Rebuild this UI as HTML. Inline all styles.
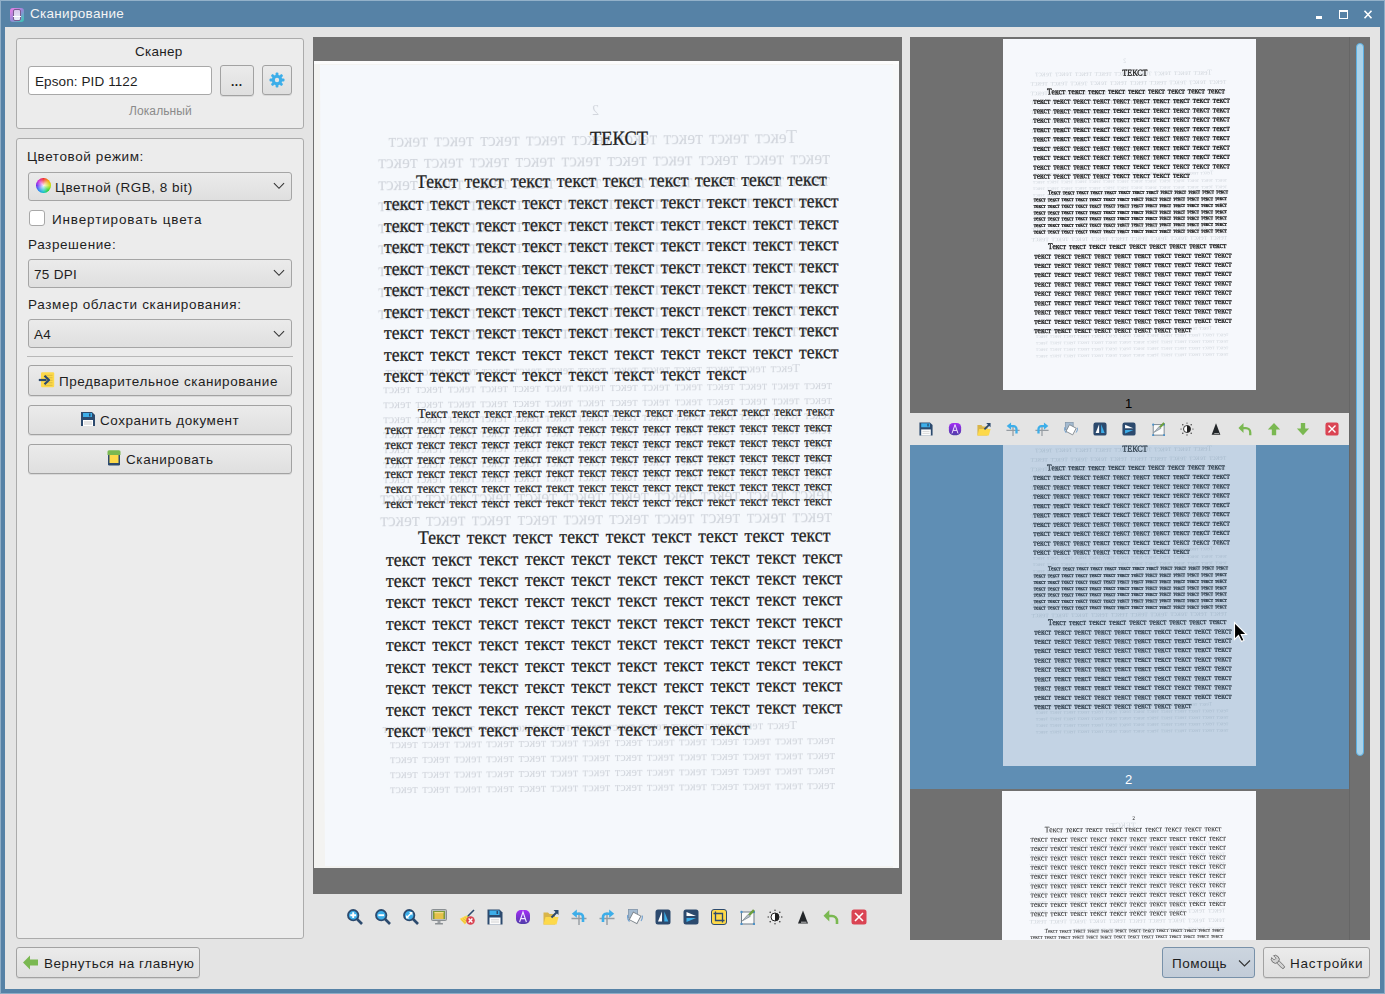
<!DOCTYPE html>
<html><head><meta charset="utf-8">
<style>
*{box-sizing:border-box;margin:0;padding:0}
html,body{width:1385px;height:994px;overflow:hidden;background:#5682a6;font-family:"Liberation Sans",sans-serif;font-size:13.5px;color:#1e1e1e}
.a{position:absolute}
#win{position:absolute;left:0;top:0;width:1385px;height:994px;background:#5682a6}
#content{position:absolute;left:5px;top:27px;width:1375px;height:962px;background:#e4e4e4}
.title{left:30px;top:6px;color:#f4f4f4;font-size:13.5px;letter-spacing:0.3px;white-space:nowrap}
.grp{position:absolute;background:#ececec;border:1px solid #ababab;border-radius:3px}
.txt{position:absolute;white-space:nowrap;line-height:16px}
.btn{position:absolute;border:1px solid #a2a2a2;border-radius:3px;background:linear-gradient(#ebebeb,#dfdfdf);box-shadow:0 1px 0 rgba(0,0,0,0.08)}
.combo{position:absolute;border:1px solid #a5a5a5;border-radius:3px;background:linear-gradient(#ebebeb,#dfdfdf)}
.chev{position:absolute;right:10px;top:9px;width:12px;height:8px}
.frame{position:absolute;background:#707070}
.sc{position:absolute;left:0;top:0;width:585px;height:807px;transform-origin:0 0}
#page .dk{color:#222;-webkit-text-stroke:0.25px #222}
.sc .dk{color:#1c1c1c;-webkit-text-stroke:0.7px #1c1c1c}
#page .fl{color:#d2d6dd;filter:blur(0.35px)}
.sc .fl{color:#d3d8de}
.sc3 .dk{color:#2a2a2a;-webkit-text-stroke:0.15px #2a2a2a}
.pl{position:absolute;white-space:nowrap;font-family:"Liberation Serif",serif;line-height:1em;transform-origin:0 0.8375em}
</style></head><body>
<div id="win">
  <div class="a" style="left:0;top:0;width:1385px;height:1px;background:#93b1c9"></div><div class="a" style="left:0;top:0;width:1px;height:994px;background:#8eadc6"></div><div class="a" style="left:1384px;top:0;width:1px;height:994px;background:#8eadc6"></div><div class="a" style="left:0;top:993px;width:1385px;height:1px;background:#8eadc6"></div>
  <!-- title icon -->
  <div class="a" style="left:10px;top:8px;width:14px;height:14px;border-radius:3px;background:linear-gradient(135deg,#f07ee8,#9a88d8 50%,#2fd0b0)">
    <div class="a" style="left:3px;top:1px;width:8px;height:12px;border:1px solid #7a5a90;border-radius:2px;background:linear-gradient(#d8c8ec,#e6eef6)"></div>
    <div class="a" style="left:3px;top:8px;width:8px;height:1px;background:#fff"></div>
  </div>
  <div class="a title">Сканирование</div>
  <!-- window buttons -->
  <div class="a" style="left:1316px;top:16px;width:6px;height:3px;background:#fff"></div>
  <div class="a" style="left:1339px;top:10px;width:9px;height:9px;border:1px solid #fff;border-top-width:2px"></div>
  <svg class="a" style="left:1363px;top:10px" width="10" height="9" viewBox="0 0 10 9"><path d="M1.5 0.8L8.5 8.2M8.5 0.8L1.5 8.2" stroke="#fff" stroke-width="1.6"/></svg>
</div>
<div id="content"></div>

<!-- PREVIEW -->

<div class="frame" style="left:313px;top:37px;width:589px;height:857px"></div>
<div id="page" class="a" style="left:314px;top:61px;width:585px;height:807px;background:#fcfcfc;overflow:hidden"><div class="a" style="left:0;top:3px;width:585px;height:804px;background:#f3f3f1"></div><div class="a" style="left:6px;top:4px;width:573px;height:801px;background:#f5f8fc;clip-path:polygon(0 0,100% 0,100% 100%,5px 100%)"></div><div class="a" style="left:579px;top:3px;width:6px;height:804px;background:#f7f8f9"></div><!--PAGE--><div class="pl fl" style="left:285.0px;top:43.1px;font-size:14px;word-spacing:0px;transform:rotate(-0.35deg) scaleX(-1);">2</div>
<div class="pl fl" style="left:483.0px;top:67.9px;font-size:17.8px;word-spacing:1.85px;transform:rotate(-0.55deg) scaleX(-1);">Текст текст текст текст текст текст текст текст текст</div>
<div class="pl fl" style="left:516.0px;top:89.4px;font-size:17.8px;word-spacing:1.85px;transform:rotate(-0.55deg) scaleX(-1);">текст текст текст текст текст текст текст текст текст текст</div>
<div class="pl fl" style="left:516.0px;top:110.8px;font-size:17.8px;word-spacing:1.85px;transform:rotate(-0.55deg) scaleX(-1);">текст текст текст текст текст текст текст текст текст текст</div>
<div class="pl fl" style="left:516.0px;top:132.3px;font-size:17.8px;word-spacing:1.85px;transform:rotate(-0.55deg) scaleX(-1);">текст текст текст текст текст текст текст текст текст текст</div>
<div class="pl fl" style="left:516.0px;top:153.7px;font-size:17.8px;word-spacing:1.85px;transform:rotate(-0.55deg) scaleX(-1);">текст текст текст текст текст текст текст текст текст текст</div>
<div class="pl fl" style="left:516.0px;top:175.2px;font-size:17.8px;word-spacing:1.85px;transform:rotate(-0.55deg) scaleX(-1);">текст текст текст текст текст текст текст текст текст текст</div>
<div class="pl fl" style="left:516.0px;top:196.6px;font-size:17.8px;word-spacing:1.85px;transform:rotate(-0.55deg) scaleX(-1);">текст текст текст текст текст текст текст текст текст текст</div>
<div class="pl fl" style="left:516.0px;top:218.1px;font-size:17.8px;word-spacing:1.85px;transform:rotate(-0.55deg) scaleX(-1);">текст текст текст текст текст текст текст текст текст текст</div>
<div class="pl fl" style="left:516.0px;top:239.5px;font-size:17.8px;word-spacing:1.85px;transform:rotate(-0.55deg) scaleX(-1);">текст текст текст текст текст текст текст текст текст текст</div>
<div class="pl fl" style="left:516.0px;top:261.0px;font-size:17.8px;word-spacing:1.85px;transform:rotate(-0.55deg) scaleX(-1);">текст текст текст текст текст текст текст текст</div>
<div class="pl fl" style="left:486.0px;top:300.9px;font-size:12.46px;word-spacing:1.3px;transform:rotate(-0.55deg) scaleX(-1);">Текст текст текст текст текст текст текст текст текст текст текст текст текст</div>
<div class="pl fl" style="left:518.0px;top:318.4px;font-size:12.46px;word-spacing:1.6px;transform:rotate(-0.55deg) scaleX(-1);">текст текст текст текст текст текст текст текст текст текст текст текст текст текст</div>
<div class="pl fl" style="left:518.0px;top:333.4px;font-size:12.46px;word-spacing:1.6px;transform:rotate(-0.55deg) scaleX(-1);">текст текст текст текст текст текст текст текст текст текст текст текст текст текст</div>
<div class="pl fl" style="left:518.0px;top:348.4px;font-size:12.46px;word-spacing:1.6px;transform:rotate(-0.55deg) scaleX(-1);">текст текст текст текст текст текст текст текст текст текст текст текст текст текст</div>
<div class="pl fl" style="left:518.0px;top:363.4px;font-size:12.46px;word-spacing:1.6px;transform:rotate(-0.55deg) scaleX(-1);">текст текст текст текст текст текст текст текст текст текст текст текст текст текст</div>
<div class="pl fl" style="left:518.0px;top:378.4px;font-size:12.46px;word-spacing:1.6px;transform:rotate(-0.55deg) scaleX(-1);">текст текст текст текст текст текст текст текст текст текст текст текст текст текст</div>
<div class="pl fl" style="left:518.0px;top:393.4px;font-size:12.46px;word-spacing:1.6px;transform:rotate(-0.55deg) scaleX(-1);">текст текст текст текст текст текст текст текст текст текст текст текст текст текст</div>
<div class="pl fl" style="left:518.0px;top:408.4px;font-size:12.46px;word-spacing:1.6px;transform:rotate(-0.55deg) scaleX(-1);">текст текст текст текст текст текст текст текст текст текст текст текст текст текст</div>
<div class="pl fl" style="left:518.0px;top:425.4px;font-size:17.8px;word-spacing:1.85px;transform:rotate(-0.55deg) scaleX(-1);">текст текст текст текст текст текст текст текст текст текст</div>
<div class="pl fl" style="left:518.0px;top:446.8px;font-size:17.8px;word-spacing:1.85px;transform:rotate(-0.55deg) scaleX(-1);">текст текст текст текст текст текст текст текст текст текст</div>
<div class="pl fl" style="left:483.0px;top:657.9px;font-size:12.46px;word-spacing:1.3px;transform:rotate(-0.55deg) scaleX(-1);">Текст текст текст текст текст текст текст текст текст текст текст текст текст</div>
<div class="pl fl" style="left:521.0px;top:673.1px;font-size:12.46px;word-spacing:1.3px;transform:rotate(-0.55deg) scaleX(-1);">текст текст текст текст текст текст текст текст текст текст текст текст текст текст</div>
<div class="pl fl" style="left:521.0px;top:687.9px;font-size:12.46px;word-spacing:1.3px;transform:rotate(-0.55deg) scaleX(-1);">текст текст текст текст текст текст текст текст текст текст текст текст текст текст</div>
<div class="pl fl" style="left:521.0px;top:702.7px;font-size:12.46px;word-spacing:1.3px;transform:rotate(-0.55deg) scaleX(-1);">текст текст текст текст текст текст текст текст текст текст текст текст текст текст</div>
<div class="pl fl" style="left:521.0px;top:717.5px;font-size:12.46px;word-spacing:1.3px;transform:rotate(-0.55deg) scaleX(-1);">текст текст текст текст текст текст текст текст текст текст текст текст текст текст</div><div class="pl dk" style="left:276.0px;top:68.5px;font-size:18.5px;word-spacing:0px;transform:rotate(-0.35deg) scaleY(1.08);">ТЕКСТ</div>
<div class="pl dk" style="left:101.5px;top:113.2px;font-size:17.8px;word-spacing:2.15px;transform:rotate(-0.35deg) scaleY(1.08);">Текст текст текст текст текст текст текст текст текст</div>
<div class="pl dk" style="left:69.5px;top:135.4px;font-size:17.8px;word-spacing:2.15px;transform:rotate(-0.35deg) scaleY(1.08);">текст текст текст текст текст текст текст текст текст текст</div>
<div class="pl dk" style="left:69.5px;top:156.8px;font-size:17.8px;word-spacing:2.15px;transform:rotate(-0.35deg) scaleY(1.08);">текст текст текст текст текст текст текст текст текст текст</div>
<div class="pl dk" style="left:69.5px;top:178.3px;font-size:17.8px;word-spacing:2.15px;transform:rotate(-0.35deg) scaleY(1.08);">текст текст текст текст текст текст текст текст текст текст</div>
<div class="pl dk" style="left:69.5px;top:199.7px;font-size:17.8px;word-spacing:2.15px;transform:rotate(-0.35deg) scaleY(1.08);">текст текст текст текст текст текст текст текст текст текст</div>
<div class="pl dk" style="left:69.5px;top:221.2px;font-size:17.8px;word-spacing:2.15px;transform:rotate(-0.35deg) scaleY(1.08);">текст текст текст текст текст текст текст текст текст текст</div>
<div class="pl dk" style="left:69.5px;top:242.6px;font-size:17.8px;word-spacing:2.15px;transform:rotate(-0.35deg) scaleY(1.08);">текст текст текст текст текст текст текст текст текст текст</div>
<div class="pl dk" style="left:69.5px;top:264.1px;font-size:17.8px;word-spacing:2.15px;transform:rotate(-0.35deg) scaleY(1.08);">текст текст текст текст текст текст текст текст текст текст</div>
<div class="pl dk" style="left:69.5px;top:285.5px;font-size:17.8px;word-spacing:2.15px;transform:rotate(-0.35deg) scaleY(1.08);">текст текст текст текст текст текст текст текст текст текст</div>
<div class="pl dk" style="left:69.7px;top:307.0px;font-size:17.8px;word-spacing:2.15px;transform:rotate(-0.35deg) scaleY(1.08);">текст текст текст текст текст текст текст текст</div>
<div class="pl dk" style="left:103.8px;top:347.2px;font-size:12.46px;word-spacing:1.45px;transform:rotate(-0.35deg) scaleY(1.08);">Текст текст текст текст текст текст текст текст текст текст текст текст текст</div>
<div class="pl dk" style="left:70.6px;top:362.6px;font-size:12.46px;word-spacing:1.45px;transform:rotate(-0.35deg) scaleY(1.08);">текст текст текст текст текст текст текст текст текст текст текст текст текст текст</div>
<div class="pl dk" style="left:70.6px;top:377.5px;font-size:12.46px;word-spacing:1.45px;transform:rotate(-0.35deg) scaleY(1.08);">текст текст текст текст текст текст текст текст текст текст текст текст текст текст</div>
<div class="pl dk" style="left:70.6px;top:392.5px;font-size:12.46px;word-spacing:1.45px;transform:rotate(-0.35deg) scaleY(1.08);">текст текст текст текст текст текст текст текст текст текст текст текст текст текст</div>
<div class="pl dk" style="left:70.6px;top:407.4px;font-size:12.46px;word-spacing:1.45px;transform:rotate(-0.35deg) scaleY(1.08);">текст текст текст текст текст текст текст текст текст текст текст текст текст текст</div>
<div class="pl dk" style="left:70.6px;top:422.4px;font-size:12.46px;word-spacing:1.45px;transform:rotate(-0.35deg) scaleY(1.08);">текст текст текст текст текст текст текст текст текст текст текст текст текст текст</div>
<div class="pl dk" style="left:70.6px;top:437.3px;font-size:12.46px;word-spacing:1.45px;transform:rotate(-0.35deg) scaleY(1.08);">текст текст текст текст текст текст текст текст текст текст текст текст текст текст</div>
<div class="pl dk" style="left:104.2px;top:468.9px;font-size:17.8px;word-spacing:2.35px;transform:rotate(-0.35deg) scaleY(1.08);">Текст текст текст текст текст текст текст текст текст</div>
<div class="pl dk" style="left:71.7px;top:490.6px;font-size:17.8px;word-spacing:2.35px;transform:rotate(-0.35deg) scaleY(1.08);">текст текст текст текст текст текст текст текст текст текст</div>
<div class="pl dk" style="left:71.7px;top:512.0px;font-size:17.8px;word-spacing:2.35px;transform:rotate(-0.35deg) scaleY(1.08);">текст текст текст текст текст текст текст текст текст текст</div>
<div class="pl dk" style="left:71.7px;top:533.4px;font-size:17.8px;word-spacing:2.35px;transform:rotate(-0.35deg) scaleY(1.08);">текст текст текст текст текст текст текст текст текст текст</div>
<div class="pl dk" style="left:71.7px;top:554.9px;font-size:17.8px;word-spacing:2.35px;transform:rotate(-0.35deg) scaleY(1.08);">текст текст текст текст текст текст текст текст текст текст</div>
<div class="pl dk" style="left:71.7px;top:576.3px;font-size:17.8px;word-spacing:2.35px;transform:rotate(-0.35deg) scaleY(1.08);">текст текст текст текст текст текст текст текст текст текст</div>
<div class="pl dk" style="left:71.7px;top:597.7px;font-size:17.8px;word-spacing:2.35px;transform:rotate(-0.35deg) scaleY(1.08);">текст текст текст текст текст текст текст текст текст текст</div>
<div class="pl dk" style="left:71.7px;top:619.1px;font-size:17.8px;word-spacing:2.35px;transform:rotate(-0.35deg) scaleY(1.08);">текст текст текст текст текст текст текст текст текст текст</div>
<div class="pl dk" style="left:71.7px;top:640.5px;font-size:17.8px;word-spacing:2.35px;transform:rotate(-0.35deg) scaleY(1.08);">текст текст текст текст текст текст текст текст текст текст</div>
<div class="pl dk" style="left:71.7px;top:661.9px;font-size:17.8px;word-spacing:2.35px;transform:rotate(-0.35deg) scaleY(1.08);">текст текст текст текст текст текст текст текст</div><!--/PAGE--></div>

<!-- RIGHT LIST -->

<div class="frame" style="left:910px;top:37px;width:460px;height:903px;overflow:hidden">
  <div class="a" style="left:439px;top:0;width:1px;height:903px;background:#666"></div>
  <div class="a" style="left:446px;top:6px;width:8px;height:713px;border-radius:4px;background:#abd3ea;border:1px solid #5cb0e2"></div>
  <div id="t1" class="a" style="left:93px;top:2px;width:253px;height:351px;background:#f6f8fc;overflow:hidden"><div class="sc" style="transform:scale(0.4325,0.435)"><!--T1--><div class="pl fl" style="left:285.0px;top:43.1px;font-size:14px;word-spacing:0px;transform:rotate(-0.35deg) scaleX(-1);">2</div>
<div class="pl fl" style="left:483.0px;top:67.9px;font-size:17.8px;word-spacing:1.85px;transform:rotate(-0.55deg) scaleX(-1);">Текст текст текст текст текст текст текст текст текст</div>
<div class="pl fl" style="left:516.0px;top:89.4px;font-size:17.8px;word-spacing:1.85px;transform:rotate(-0.55deg) scaleX(-1);">текст текст текст текст текст текст текст текст текст текст</div>
<div class="pl fl" style="left:516.0px;top:110.8px;font-size:17.8px;word-spacing:1.85px;transform:rotate(-0.55deg) scaleX(-1);">текст текст текст текст текст текст текст текст текст текст</div>
<div class="pl fl" style="left:516.0px;top:132.3px;font-size:17.8px;word-spacing:1.85px;transform:rotate(-0.55deg) scaleX(-1);">текст текст текст текст текст текст текст текст текст текст</div>
<div class="pl fl" style="left:516.0px;top:153.7px;font-size:17.8px;word-spacing:1.85px;transform:rotate(-0.55deg) scaleX(-1);">текст текст текст текст текст текст текст текст текст текст</div>
<div class="pl fl" style="left:516.0px;top:175.2px;font-size:17.8px;word-spacing:1.85px;transform:rotate(-0.55deg) scaleX(-1);">текст текст текст текст текст текст текст текст текст текст</div>
<div class="pl fl" style="left:516.0px;top:196.6px;font-size:17.8px;word-spacing:1.85px;transform:rotate(-0.55deg) scaleX(-1);">текст текст текст текст текст текст текст текст текст текст</div>
<div class="pl fl" style="left:516.0px;top:218.1px;font-size:17.8px;word-spacing:1.85px;transform:rotate(-0.55deg) scaleX(-1);">текст текст текст текст текст текст текст текст текст текст</div>
<div class="pl fl" style="left:516.0px;top:239.5px;font-size:17.8px;word-spacing:1.85px;transform:rotate(-0.55deg) scaleX(-1);">текст текст текст текст текст текст текст текст текст текст</div>
<div class="pl fl" style="left:516.0px;top:261.0px;font-size:17.8px;word-spacing:1.85px;transform:rotate(-0.55deg) scaleX(-1);">текст текст текст текст текст текст текст текст</div>
<div class="pl fl" style="left:486.0px;top:300.9px;font-size:12.46px;word-spacing:1.3px;transform:rotate(-0.55deg) scaleX(-1);">Текст текст текст текст текст текст текст текст текст текст текст текст текст</div>
<div class="pl fl" style="left:518.0px;top:318.4px;font-size:12.46px;word-spacing:1.6px;transform:rotate(-0.55deg) scaleX(-1);">текст текст текст текст текст текст текст текст текст текст текст текст текст текст</div>
<div class="pl fl" style="left:518.0px;top:333.4px;font-size:12.46px;word-spacing:1.6px;transform:rotate(-0.55deg) scaleX(-1);">текст текст текст текст текст текст текст текст текст текст текст текст текст текст</div>
<div class="pl fl" style="left:518.0px;top:348.4px;font-size:12.46px;word-spacing:1.6px;transform:rotate(-0.55deg) scaleX(-1);">текст текст текст текст текст текст текст текст текст текст текст текст текст текст</div>
<div class="pl fl" style="left:518.0px;top:363.4px;font-size:12.46px;word-spacing:1.6px;transform:rotate(-0.55deg) scaleX(-1);">текст текст текст текст текст текст текст текст текст текст текст текст текст текст</div>
<div class="pl fl" style="left:518.0px;top:378.4px;font-size:12.46px;word-spacing:1.6px;transform:rotate(-0.55deg) scaleX(-1);">текст текст текст текст текст текст текст текст текст текст текст текст текст текст</div>
<div class="pl fl" style="left:518.0px;top:393.4px;font-size:12.46px;word-spacing:1.6px;transform:rotate(-0.55deg) scaleX(-1);">текст текст текст текст текст текст текст текст текст текст текст текст текст текст</div>
<div class="pl fl" style="left:518.0px;top:408.4px;font-size:12.46px;word-spacing:1.6px;transform:rotate(-0.55deg) scaleX(-1);">текст текст текст текст текст текст текст текст текст текст текст текст текст текст</div>
<div class="pl fl" style="left:518.0px;top:425.4px;font-size:17.8px;word-spacing:1.85px;transform:rotate(-0.55deg) scaleX(-1);">текст текст текст текст текст текст текст текст текст текст</div>
<div class="pl fl" style="left:518.0px;top:446.8px;font-size:17.8px;word-spacing:1.85px;transform:rotate(-0.55deg) scaleX(-1);">текст текст текст текст текст текст текст текст текст текст</div>
<div class="pl fl" style="left:483.0px;top:657.9px;font-size:12.46px;word-spacing:1.3px;transform:rotate(-0.55deg) scaleX(-1);">Текст текст текст текст текст текст текст текст текст текст текст текст текст</div>
<div class="pl fl" style="left:521.0px;top:673.1px;font-size:12.46px;word-spacing:1.3px;transform:rotate(-0.55deg) scaleX(-1);">текст текст текст текст текст текст текст текст текст текст текст текст текст текст</div>
<div class="pl fl" style="left:521.0px;top:687.9px;font-size:12.46px;word-spacing:1.3px;transform:rotate(-0.55deg) scaleX(-1);">текст текст текст текст текст текст текст текст текст текст текст текст текст текст</div>
<div class="pl fl" style="left:521.0px;top:702.7px;font-size:12.46px;word-spacing:1.3px;transform:rotate(-0.55deg) scaleX(-1);">текст текст текст текст текст текст текст текст текст текст текст текст текст текст</div>
<div class="pl fl" style="left:521.0px;top:717.5px;font-size:12.46px;word-spacing:1.3px;transform:rotate(-0.55deg) scaleX(-1);">текст текст текст текст текст текст текст текст текст текст текст текст текст текст</div><div class="pl dk" style="left:276.0px;top:68.5px;font-size:18.5px;word-spacing:0px;transform:rotate(-0.35deg) scaleY(1.08);">ТЕКСТ</div>
<div class="pl dk" style="left:101.5px;top:113.2px;font-size:17.8px;word-spacing:2.15px;transform:rotate(-0.35deg) scaleY(1.08);">Текст текст текст текст текст текст текст текст текст</div>
<div class="pl dk" style="left:69.5px;top:135.4px;font-size:17.8px;word-spacing:2.15px;transform:rotate(-0.35deg) scaleY(1.08);">текст текст текст текст текст текст текст текст текст текст</div>
<div class="pl dk" style="left:69.5px;top:156.8px;font-size:17.8px;word-spacing:2.15px;transform:rotate(-0.35deg) scaleY(1.08);">текст текст текст текст текст текст текст текст текст текст</div>
<div class="pl dk" style="left:69.5px;top:178.3px;font-size:17.8px;word-spacing:2.15px;transform:rotate(-0.35deg) scaleY(1.08);">текст текст текст текст текст текст текст текст текст текст</div>
<div class="pl dk" style="left:69.5px;top:199.7px;font-size:17.8px;word-spacing:2.15px;transform:rotate(-0.35deg) scaleY(1.08);">текст текст текст текст текст текст текст текст текст текст</div>
<div class="pl dk" style="left:69.5px;top:221.2px;font-size:17.8px;word-spacing:2.15px;transform:rotate(-0.35deg) scaleY(1.08);">текст текст текст текст текст текст текст текст текст текст</div>
<div class="pl dk" style="left:69.5px;top:242.6px;font-size:17.8px;word-spacing:2.15px;transform:rotate(-0.35deg) scaleY(1.08);">текст текст текст текст текст текст текст текст текст текст</div>
<div class="pl dk" style="left:69.5px;top:264.1px;font-size:17.8px;word-spacing:2.15px;transform:rotate(-0.35deg) scaleY(1.08);">текст текст текст текст текст текст текст текст текст текст</div>
<div class="pl dk" style="left:69.5px;top:285.5px;font-size:17.8px;word-spacing:2.15px;transform:rotate(-0.35deg) scaleY(1.08);">текст текст текст текст текст текст текст текст текст текст</div>
<div class="pl dk" style="left:69.7px;top:307.0px;font-size:17.8px;word-spacing:2.15px;transform:rotate(-0.35deg) scaleY(1.08);">текст текст текст текст текст текст текст текст</div>
<div class="pl dk" style="left:103.8px;top:347.2px;font-size:12.46px;word-spacing:1.45px;transform:rotate(-0.35deg) scaleY(1.08);">Текст текст текст текст текст текст текст текст текст текст текст текст текст</div>
<div class="pl dk" style="left:70.6px;top:362.6px;font-size:12.46px;word-spacing:1.45px;transform:rotate(-0.35deg) scaleY(1.08);">текст текст текст текст текст текст текст текст текст текст текст текст текст текст</div>
<div class="pl dk" style="left:70.6px;top:377.5px;font-size:12.46px;word-spacing:1.45px;transform:rotate(-0.35deg) scaleY(1.08);">текст текст текст текст текст текст текст текст текст текст текст текст текст текст</div>
<div class="pl dk" style="left:70.6px;top:392.5px;font-size:12.46px;word-spacing:1.45px;transform:rotate(-0.35deg) scaleY(1.08);">текст текст текст текст текст текст текст текст текст текст текст текст текст текст</div>
<div class="pl dk" style="left:70.6px;top:407.4px;font-size:12.46px;word-spacing:1.45px;transform:rotate(-0.35deg) scaleY(1.08);">текст текст текст текст текст текст текст текст текст текст текст текст текст текст</div>
<div class="pl dk" style="left:70.6px;top:422.4px;font-size:12.46px;word-spacing:1.45px;transform:rotate(-0.35deg) scaleY(1.08);">текст текст текст текст текст текст текст текст текст текст текст текст текст текст</div>
<div class="pl dk" style="left:70.6px;top:437.3px;font-size:12.46px;word-spacing:1.45px;transform:rotate(-0.35deg) scaleY(1.08);">текст текст текст текст текст текст текст текст текст текст текст текст текст текст</div>
<div class="pl dk" style="left:104.2px;top:468.9px;font-size:17.8px;word-spacing:2.35px;transform:rotate(-0.35deg) scaleY(1.08);">Текст текст текст текст текст текст текст текст текст</div>
<div class="pl dk" style="left:71.7px;top:490.6px;font-size:17.8px;word-spacing:2.35px;transform:rotate(-0.35deg) scaleY(1.08);">текст текст текст текст текст текст текст текст текст текст</div>
<div class="pl dk" style="left:71.7px;top:512.0px;font-size:17.8px;word-spacing:2.35px;transform:rotate(-0.35deg) scaleY(1.08);">текст текст текст текст текст текст текст текст текст текст</div>
<div class="pl dk" style="left:71.7px;top:533.4px;font-size:17.8px;word-spacing:2.35px;transform:rotate(-0.35deg) scaleY(1.08);">текст текст текст текст текст текст текст текст текст текст</div>
<div class="pl dk" style="left:71.7px;top:554.9px;font-size:17.8px;word-spacing:2.35px;transform:rotate(-0.35deg) scaleY(1.08);">текст текст текст текст текст текст текст текст текст текст</div>
<div class="pl dk" style="left:71.7px;top:576.3px;font-size:17.8px;word-spacing:2.35px;transform:rotate(-0.35deg) scaleY(1.08);">текст текст текст текст текст текст текст текст текст текст</div>
<div class="pl dk" style="left:71.7px;top:597.7px;font-size:17.8px;word-spacing:2.35px;transform:rotate(-0.35deg) scaleY(1.08);">текст текст текст текст текст текст текст текст текст текст</div>
<div class="pl dk" style="left:71.7px;top:619.1px;font-size:17.8px;word-spacing:2.35px;transform:rotate(-0.35deg) scaleY(1.08);">текст текст текст текст текст текст текст текст текст текст</div>
<div class="pl dk" style="left:71.7px;top:640.5px;font-size:17.8px;word-spacing:2.35px;transform:rotate(-0.35deg) scaleY(1.08);">текст текст текст текст текст текст текст текст текст текст</div>
<div class="pl dk" style="left:71.7px;top:661.9px;font-size:17.8px;word-spacing:2.35px;transform:rotate(-0.35deg) scaleY(1.08);">текст текст текст текст текст текст текст текст</div><!--/T1--></div></div>
  <div class="txt" style="left:-1px;top:359px;width:439px;text-align:center;color:#000;font-size:13px">1</div>
  <div class="a" style="left:0;top:408px;width:439px;height:344px;background:#5f8eb4"></div>
  <div id="t2" class="a" style="left:93px;top:378px;width:253px;height:351px;background:#f6f8fc;overflow:hidden"><div class="sc" style="transform:scale(0.4325,0.435)"><!--T2--><div class="pl fl" style="left:285.0px;top:43.1px;font-size:14px;word-spacing:0px;transform:rotate(-0.35deg) scaleX(-1);">2</div>
<div class="pl fl" style="left:483.0px;top:67.9px;font-size:17.8px;word-spacing:1.85px;transform:rotate(-0.55deg) scaleX(-1);">Текст текст текст текст текст текст текст текст текст</div>
<div class="pl fl" style="left:516.0px;top:89.4px;font-size:17.8px;word-spacing:1.85px;transform:rotate(-0.55deg) scaleX(-1);">текст текст текст текст текст текст текст текст текст текст</div>
<div class="pl fl" style="left:516.0px;top:110.8px;font-size:17.8px;word-spacing:1.85px;transform:rotate(-0.55deg) scaleX(-1);">текст текст текст текст текст текст текст текст текст текст</div>
<div class="pl fl" style="left:516.0px;top:132.3px;font-size:17.8px;word-spacing:1.85px;transform:rotate(-0.55deg) scaleX(-1);">текст текст текст текст текст текст текст текст текст текст</div>
<div class="pl fl" style="left:516.0px;top:153.7px;font-size:17.8px;word-spacing:1.85px;transform:rotate(-0.55deg) scaleX(-1);">текст текст текст текст текст текст текст текст текст текст</div>
<div class="pl fl" style="left:516.0px;top:175.2px;font-size:17.8px;word-spacing:1.85px;transform:rotate(-0.55deg) scaleX(-1);">текст текст текст текст текст текст текст текст текст текст</div>
<div class="pl fl" style="left:516.0px;top:196.6px;font-size:17.8px;word-spacing:1.85px;transform:rotate(-0.55deg) scaleX(-1);">текст текст текст текст текст текст текст текст текст текст</div>
<div class="pl fl" style="left:516.0px;top:218.1px;font-size:17.8px;word-spacing:1.85px;transform:rotate(-0.55deg) scaleX(-1);">текст текст текст текст текст текст текст текст текст текст</div>
<div class="pl fl" style="left:516.0px;top:239.5px;font-size:17.8px;word-spacing:1.85px;transform:rotate(-0.55deg) scaleX(-1);">текст текст текст текст текст текст текст текст текст текст</div>
<div class="pl fl" style="left:516.0px;top:261.0px;font-size:17.8px;word-spacing:1.85px;transform:rotate(-0.55deg) scaleX(-1);">текст текст текст текст текст текст текст текст</div>
<div class="pl fl" style="left:486.0px;top:300.9px;font-size:12.46px;word-spacing:1.3px;transform:rotate(-0.55deg) scaleX(-1);">Текст текст текст текст текст текст текст текст текст текст текст текст текст</div>
<div class="pl fl" style="left:518.0px;top:318.4px;font-size:12.46px;word-spacing:1.6px;transform:rotate(-0.55deg) scaleX(-1);">текст текст текст текст текст текст текст текст текст текст текст текст текст текст</div>
<div class="pl fl" style="left:518.0px;top:333.4px;font-size:12.46px;word-spacing:1.6px;transform:rotate(-0.55deg) scaleX(-1);">текст текст текст текст текст текст текст текст текст текст текст текст текст текст</div>
<div class="pl fl" style="left:518.0px;top:348.4px;font-size:12.46px;word-spacing:1.6px;transform:rotate(-0.55deg) scaleX(-1);">текст текст текст текст текст текст текст текст текст текст текст текст текст текст</div>
<div class="pl fl" style="left:518.0px;top:363.4px;font-size:12.46px;word-spacing:1.6px;transform:rotate(-0.55deg) scaleX(-1);">текст текст текст текст текст текст текст текст текст текст текст текст текст текст</div>
<div class="pl fl" style="left:518.0px;top:378.4px;font-size:12.46px;word-spacing:1.6px;transform:rotate(-0.55deg) scaleX(-1);">текст текст текст текст текст текст текст текст текст текст текст текст текст текст</div>
<div class="pl fl" style="left:518.0px;top:393.4px;font-size:12.46px;word-spacing:1.6px;transform:rotate(-0.55deg) scaleX(-1);">текст текст текст текст текст текст текст текст текст текст текст текст текст текст</div>
<div class="pl fl" style="left:518.0px;top:408.4px;font-size:12.46px;word-spacing:1.6px;transform:rotate(-0.55deg) scaleX(-1);">текст текст текст текст текст текст текст текст текст текст текст текст текст текст</div>
<div class="pl fl" style="left:518.0px;top:425.4px;font-size:17.8px;word-spacing:1.85px;transform:rotate(-0.55deg) scaleX(-1);">текст текст текст текст текст текст текст текст текст текст</div>
<div class="pl fl" style="left:518.0px;top:446.8px;font-size:17.8px;word-spacing:1.85px;transform:rotate(-0.55deg) scaleX(-1);">текст текст текст текст текст текст текст текст текст текст</div>
<div class="pl fl" style="left:483.0px;top:657.9px;font-size:12.46px;word-spacing:1.3px;transform:rotate(-0.55deg) scaleX(-1);">Текст текст текст текст текст текст текст текст текст текст текст текст текст</div>
<div class="pl fl" style="left:521.0px;top:673.1px;font-size:12.46px;word-spacing:1.3px;transform:rotate(-0.55deg) scaleX(-1);">текст текст текст текст текст текст текст текст текст текст текст текст текст текст</div>
<div class="pl fl" style="left:521.0px;top:687.9px;font-size:12.46px;word-spacing:1.3px;transform:rotate(-0.55deg) scaleX(-1);">текст текст текст текст текст текст текст текст текст текст текст текст текст текст</div>
<div class="pl fl" style="left:521.0px;top:702.7px;font-size:12.46px;word-spacing:1.3px;transform:rotate(-0.55deg) scaleX(-1);">текст текст текст текст текст текст текст текст текст текст текст текст текст текст</div>
<div class="pl fl" style="left:521.0px;top:717.5px;font-size:12.46px;word-spacing:1.3px;transform:rotate(-0.55deg) scaleX(-1);">текст текст текст текст текст текст текст текст текст текст текст текст текст текст</div><div class="pl dk" style="left:276.0px;top:68.5px;font-size:18.5px;word-spacing:0px;transform:rotate(-0.35deg) scaleY(1.08);">ТЕКСТ</div>
<div class="pl dk" style="left:101.5px;top:113.2px;font-size:17.8px;word-spacing:2.15px;transform:rotate(-0.35deg) scaleY(1.08);">Текст текст текст текст текст текст текст текст текст</div>
<div class="pl dk" style="left:69.5px;top:135.4px;font-size:17.8px;word-spacing:2.15px;transform:rotate(-0.35deg) scaleY(1.08);">текст текст текст текст текст текст текст текст текст текст</div>
<div class="pl dk" style="left:69.5px;top:156.8px;font-size:17.8px;word-spacing:2.15px;transform:rotate(-0.35deg) scaleY(1.08);">текст текст текст текст текст текст текст текст текст текст</div>
<div class="pl dk" style="left:69.5px;top:178.3px;font-size:17.8px;word-spacing:2.15px;transform:rotate(-0.35deg) scaleY(1.08);">текст текст текст текст текст текст текст текст текст текст</div>
<div class="pl dk" style="left:69.5px;top:199.7px;font-size:17.8px;word-spacing:2.15px;transform:rotate(-0.35deg) scaleY(1.08);">текст текст текст текст текст текст текст текст текст текст</div>
<div class="pl dk" style="left:69.5px;top:221.2px;font-size:17.8px;word-spacing:2.15px;transform:rotate(-0.35deg) scaleY(1.08);">текст текст текст текст текст текст текст текст текст текст</div>
<div class="pl dk" style="left:69.5px;top:242.6px;font-size:17.8px;word-spacing:2.15px;transform:rotate(-0.35deg) scaleY(1.08);">текст текст текст текст текст текст текст текст текст текст</div>
<div class="pl dk" style="left:69.5px;top:264.1px;font-size:17.8px;word-spacing:2.15px;transform:rotate(-0.35deg) scaleY(1.08);">текст текст текст текст текст текст текст текст текст текст</div>
<div class="pl dk" style="left:69.5px;top:285.5px;font-size:17.8px;word-spacing:2.15px;transform:rotate(-0.35deg) scaleY(1.08);">текст текст текст текст текст текст текст текст текст текст</div>
<div class="pl dk" style="left:69.7px;top:307.0px;font-size:17.8px;word-spacing:2.15px;transform:rotate(-0.35deg) scaleY(1.08);">текст текст текст текст текст текст текст текст</div>
<div class="pl dk" style="left:103.8px;top:347.2px;font-size:12.46px;word-spacing:1.45px;transform:rotate(-0.35deg) scaleY(1.08);">Текст текст текст текст текст текст текст текст текст текст текст текст текст</div>
<div class="pl dk" style="left:70.6px;top:362.6px;font-size:12.46px;word-spacing:1.45px;transform:rotate(-0.35deg) scaleY(1.08);">текст текст текст текст текст текст текст текст текст текст текст текст текст текст</div>
<div class="pl dk" style="left:70.6px;top:377.5px;font-size:12.46px;word-spacing:1.45px;transform:rotate(-0.35deg) scaleY(1.08);">текст текст текст текст текст текст текст текст текст текст текст текст текст текст</div>
<div class="pl dk" style="left:70.6px;top:392.5px;font-size:12.46px;word-spacing:1.45px;transform:rotate(-0.35deg) scaleY(1.08);">текст текст текст текст текст текст текст текст текст текст текст текст текст текст</div>
<div class="pl dk" style="left:70.6px;top:407.4px;font-size:12.46px;word-spacing:1.45px;transform:rotate(-0.35deg) scaleY(1.08);">текст текст текст текст текст текст текст текст текст текст текст текст текст текст</div>
<div class="pl dk" style="left:70.6px;top:422.4px;font-size:12.46px;word-spacing:1.45px;transform:rotate(-0.35deg) scaleY(1.08);">текст текст текст текст текст текст текст текст текст текст текст текст текст текст</div>
<div class="pl dk" style="left:70.6px;top:437.3px;font-size:12.46px;word-spacing:1.45px;transform:rotate(-0.35deg) scaleY(1.08);">текст текст текст текст текст текст текст текст текст текст текст текст текст текст</div>
<div class="pl dk" style="left:104.2px;top:468.9px;font-size:17.8px;word-spacing:2.35px;transform:rotate(-0.35deg) scaleY(1.08);">Текст текст текст текст текст текст текст текст текст</div>
<div class="pl dk" style="left:71.7px;top:490.6px;font-size:17.8px;word-spacing:2.35px;transform:rotate(-0.35deg) scaleY(1.08);">текст текст текст текст текст текст текст текст текст текст</div>
<div class="pl dk" style="left:71.7px;top:512.0px;font-size:17.8px;word-spacing:2.35px;transform:rotate(-0.35deg) scaleY(1.08);">текст текст текст текст текст текст текст текст текст текст</div>
<div class="pl dk" style="left:71.7px;top:533.4px;font-size:17.8px;word-spacing:2.35px;transform:rotate(-0.35deg) scaleY(1.08);">текст текст текст текст текст текст текст текст текст текст</div>
<div class="pl dk" style="left:71.7px;top:554.9px;font-size:17.8px;word-spacing:2.35px;transform:rotate(-0.35deg) scaleY(1.08);">текст текст текст текст текст текст текст текст текст текст</div>
<div class="pl dk" style="left:71.7px;top:576.3px;font-size:17.8px;word-spacing:2.35px;transform:rotate(-0.35deg) scaleY(1.08);">текст текст текст текст текст текст текст текст текст текст</div>
<div class="pl dk" style="left:71.7px;top:597.7px;font-size:17.8px;word-spacing:2.35px;transform:rotate(-0.35deg) scaleY(1.08);">текст текст текст текст текст текст текст текст текст текст</div>
<div class="pl dk" style="left:71.7px;top:619.1px;font-size:17.8px;word-spacing:2.35px;transform:rotate(-0.35deg) scaleY(1.08);">текст текст текст текст текст текст текст текст текст текст</div>
<div class="pl dk" style="left:71.7px;top:640.5px;font-size:17.8px;word-spacing:2.35px;transform:rotate(-0.35deg) scaleY(1.08);">текст текст текст текст текст текст текст текст текст текст</div>
<div class="pl dk" style="left:71.7px;top:661.9px;font-size:17.8px;word-spacing:2.35px;transform:rotate(-0.35deg) scaleY(1.08);">текст текст текст текст текст текст текст текст</div><!--/T2--></div></div>
  <div class="a" style="left:93px;top:378px;width:253px;height:351px;background:rgba(90,138,178,0.33)"></div>
  <div class="txt" style="left:-1px;top:735px;width:439px;text-align:center;color:#fff;font-size:13px">2</div>
  <div id="t3" class="a" style="left:92px;top:754px;width:254px;height:351px;background:#f6f8fc;overflow:hidden"><div class="sc sc3" style="transform:scale(0.4325,0.435)"><!--T3--><div class="pl fl" style="left:309.0px;top:69.8px;font-size:18.5px;word-spacing:0px;transform:rotate(-0.5deg) scaleX(-1);">ТЕКСТ</div>
<div class="pl fl" style="left:483.5px;top:114.4px;font-size:17.8px;word-spacing:1.85px;transform:rotate(-0.5deg) scaleX(-1);">Текст текст текст текст текст текст текст текст текст</div>
<div class="pl fl" style="left:515.5px;top:136.4px;font-size:17.8px;word-spacing:1.85px;transform:rotate(-0.5deg) scaleX(-1);">текст текст текст текст текст текст текст текст текст текст</div>
<div class="pl fl" style="left:515.5px;top:157.8px;font-size:17.8px;word-spacing:1.85px;transform:rotate(-0.5deg) scaleX(-1);">текст текст текст текст текст текст текст текст текст текст</div>
<div class="pl fl" style="left:515.5px;top:179.3px;font-size:17.8px;word-spacing:1.85px;transform:rotate(-0.5deg) scaleX(-1);">текст текст текст текст текст текст текст текст текст текст</div>
<div class="pl fl" style="left:515.5px;top:200.7px;font-size:17.8px;word-spacing:1.85px;transform:rotate(-0.5deg) scaleX(-1);">текст текст текст текст текст текст текст текст текст текст</div>
<div class="pl fl" style="left:515.5px;top:222.2px;font-size:17.8px;word-spacing:1.85px;transform:rotate(-0.5deg) scaleX(-1);">текст текст текст текст текст текст текст текст текст текст</div>
<div class="pl fl" style="left:515.5px;top:243.6px;font-size:17.8px;word-spacing:1.85px;transform:rotate(-0.5deg) scaleX(-1);">текст текст текст текст текст текст текст текст текст текст</div>
<div class="pl fl" style="left:515.5px;top:265.1px;font-size:17.8px;word-spacing:1.85px;transform:rotate(-0.5deg) scaleX(-1);">текст текст текст текст текст текст текст текст текст текст</div>
<div class="pl fl" style="left:515.5px;top:286.5px;font-size:17.8px;word-spacing:1.85px;transform:rotate(-0.5deg) scaleX(-1);">текст текст текст текст текст текст текст текст текст текст</div>
<div class="pl fl" style="left:515.3px;top:308.0px;font-size:17.8px;word-spacing:1.85px;transform:rotate(-0.5deg) scaleX(-1);">текст текст текст текст текст текст текст текст</div>
<div class="pl fl" style="left:481.2px;top:349.2px;font-size:12.46px;word-spacing:1.3px;transform:rotate(-0.5deg) scaleX(-1);">Текст текст текст текст текст текст текст текст текст текст текст текст текст</div>
<div class="pl fl" style="left:514.4px;top:364.6px;font-size:12.46px;word-spacing:1.3px;transform:rotate(-0.5deg) scaleX(-1);">текст текст текст текст текст текст текст текст текст текст текст текст текст текст</div>
<div class="pl fl" style="left:514.4px;top:379.5px;font-size:12.46px;word-spacing:1.3px;transform:rotate(-0.5deg) scaleX(-1);">текст текст текст текст текст текст текст текст текст текст текст текст текст текст</div>
<div class="pl fl" style="left:514.4px;top:394.5px;font-size:12.46px;word-spacing:1.3px;transform:rotate(-0.5deg) scaleX(-1);">текст текст текст текст текст текст текст текст текст текст текст текст текст текст</div>
<div class="pl fl" style="left:514.4px;top:409.4px;font-size:12.46px;word-spacing:1.3px;transform:rotate(-0.5deg) scaleX(-1);">текст текст текст текст текст текст текст текст текст текст текст текст текст текст</div>
<div class="pl fl" style="left:514.4px;top:424.4px;font-size:12.46px;word-spacing:1.3px;transform:rotate(-0.5deg) scaleX(-1);">текст текст текст текст текст текст текст текст текст текст текст текст текст текст</div>
<div class="pl fl" style="left:514.4px;top:439.3px;font-size:12.46px;word-spacing:1.3px;transform:rotate(-0.5deg) scaleX(-1);">текст текст текст текст текст текст текст текст текст текст текст текст текст текст</div><div class="pl dk" style="left:302.0px;top:57.1px;font-size:11px;word-spacing:0px;transform:rotate(-0.35deg) scaleY(1.08);">2</div>
<div class="pl dk" style="left:99.4px;top:81.4px;font-size:17.8px;word-spacing:1.85px;transform:rotate(-0.35deg) scaleY(1.08);">Текст текст текст текст текст текст текст текст текст</div>
<div class="pl dk" style="left:66.0px;top:102.8px;font-size:17.8px;word-spacing:1.85px;transform:rotate(-0.35deg) scaleY(1.08);">текст текст текст текст текст текст текст текст текст текст</div>
<div class="pl dk" style="left:66.0px;top:124.2px;font-size:17.8px;word-spacing:1.85px;transform:rotate(-0.35deg) scaleY(1.08);">текст текст текст текст текст текст текст текст текст текст</div>
<div class="pl dk" style="left:66.0px;top:145.6px;font-size:17.8px;word-spacing:1.85px;transform:rotate(-0.35deg) scaleY(1.08);">текст текст текст текст текст текст текст текст текст текст</div>
<div class="pl dk" style="left:66.0px;top:167.0px;font-size:17.8px;word-spacing:1.85px;transform:rotate(-0.35deg) scaleY(1.08);">текст текст текст текст текст текст текст текст текст текст</div>
<div class="pl dk" style="left:66.0px;top:188.4px;font-size:17.8px;word-spacing:1.85px;transform:rotate(-0.35deg) scaleY(1.08);">текст текст текст текст текст текст текст текст текст текст</div>
<div class="pl dk" style="left:66.0px;top:209.8px;font-size:17.8px;word-spacing:1.85px;transform:rotate(-0.35deg) scaleY(1.08);">текст текст текст текст текст текст текст текст текст текст</div>
<div class="pl dk" style="left:66.0px;top:231.2px;font-size:17.8px;word-spacing:1.85px;transform:rotate(-0.35deg) scaleY(1.08);">текст текст текст текст текст текст текст текст текст текст</div>
<div class="pl dk" style="left:66.0px;top:252.6px;font-size:17.8px;word-spacing:1.85px;transform:rotate(-0.35deg) scaleY(1.08);">текст текст текст текст текст текст текст текст текст текст</div>
<div class="pl dk" style="left:66.0px;top:274.4px;font-size:17.8px;word-spacing:1.85px;transform:rotate(-0.35deg) scaleY(1.08);">текст текст текст текст текст текст текст текст</div>
<div class="pl dk" style="left:99.0px;top:315.9px;font-size:12.46px;word-spacing:1.3px;transform:rotate(-0.35deg) scaleY(1.08);">Текст текст текст текст текст текст текст текст текст текст текст текст текст</div>
<div class="pl dk" style="left:66.0px;top:330.4px;font-size:12.46px;word-spacing:1.3px;transform:rotate(-0.35deg) scaleY(1.08);">текст текст текст текст текст текст текст текст текст текст текст текст текст текст</div>
<div class="pl dk" style="left:66.0px;top:345.3px;font-size:12.46px;word-spacing:1.3px;transform:rotate(-0.35deg) scaleY(1.08);">текст текст текст текст текст текст текст текст текст текст текст текст текст текст</div>
<div class="pl dk" style="left:66.0px;top:360.3px;font-size:12.46px;word-spacing:1.3px;transform:rotate(-0.35deg) scaleY(1.08);">текст текст текст текст текст текст текст текст текст текст текст текст текст текст</div>
<div class="pl dk" style="left:66.0px;top:375.2px;font-size:12.46px;word-spacing:1.3px;transform:rotate(-0.35deg) scaleY(1.08);">текст текст текст текст текст текст текст текст текст текст текст текст текст текст</div>
<div class="pl dk" style="left:66.0px;top:390.2px;font-size:12.46px;word-spacing:1.3px;transform:rotate(-0.35deg) scaleY(1.08);">текст текст текст текст текст текст текст текст текст текст текст текст текст текст</div>
<div class="pl dk" style="left:66.0px;top:405.1px;font-size:12.46px;word-spacing:1.3px;transform:rotate(-0.35deg) scaleY(1.08);">текст текст текст текст текст текст текст текст текст текст текст текст текст текст</div>
<div class="pl dk" style="left:66.0px;top:420.1px;font-size:12.46px;word-spacing:1.3px;transform:rotate(-0.35deg) scaleY(1.08);">текст текст текст текст текст текст текст текст текст текст текст текст текст текст</div>
<div class="pl dk" style="left:66.0px;top:435.0px;font-size:12.46px;word-spacing:1.3px;transform:rotate(-0.35deg) scaleY(1.08);">текст текст текст текст текст текст текст текст текст текст текст текст текст текст</div><!--/T3--></div></div>
  <div id="tbar" class="a" style="left:0;top:376px;width:439px;height:32px;background:#e4e4e4"></div>
</div>

<!--TB--><svg class="a" style="left:347px;top:909px" width="16" height="16" viewBox="0 0 16 16"><circle cx="6.2" cy="6.2" r="5.2" fill="#3daee9" stroke="#2c4a6e" stroke-width="1.8"/><path d="M10 10L15 15" stroke="#2c4a6e" stroke-width="2.6"/><path d="M3.3 6.2H9.1M6.2 3.3V9.1" stroke="#fff" stroke-width="1.9"/></svg>
<svg class="a" style="left:375px;top:909px" width="16" height="16" viewBox="0 0 16 16"><circle cx="6.2" cy="6.2" r="5.2" fill="#3daee9" stroke="#2c4a6e" stroke-width="1.8"/><path d="M10 10L15 15" stroke="#2c4a6e" stroke-width="2.6"/><path d="M3.3 6.2H9.1" stroke="#fff" stroke-width="1.9"/></svg>
<svg class="a" style="left:403px;top:909px" width="16" height="16" viewBox="0 0 16 16"><circle cx="6.2" cy="6.2" r="5.2" fill="#3daee9" stroke="#2c4a6e" stroke-width="1.8"/><path d="M10 10L15 15" stroke="#2c4a6e" stroke-width="2.6"/><path d="M4.3 8.1L8.1 4.3" stroke="#fff" stroke-width="1.5"/><path d="M3 6V9.4H6.4ZM6 3H9.4V6.4Z" fill="#fff"/></svg>
<svg class="a" style="left:431px;top:909px" width="16" height="16" viewBox="0 0 16 16"><rect x="0.5" y="0.5" width="15" height="11" rx="1" fill="#b8bcbf" stroke="#8a8f93"/><rect x="2" y="2" width="12" height="8" fill="#7f9a3a"/><rect x="3.5" y="3" width="9" height="7" fill="#e5c14a"/><rect x="3.5" y="3" width="9" height="1.2" fill="#f3dc8a"/><rect x="6.5" y="12" width="3" height="2" fill="#9a9ea2"/><rect x="4" y="14" width="8" height="1.6" rx="0.5" fill="#8a8f93"/></svg>
<svg class="a" style="left:459px;top:909px" width="16" height="16" viewBox="0 0 16 16"><path d="M15 1L9 7" stroke="#2c4a6e" stroke-width="1.6"/><path d="M8.3 6.2L10.2 8.1L9 9.3L7.2 7.4Z" fill="#7ab851"/><path d="M0.8 9.8L7.4 6.6L10 9.4L5.8 15.6Z" fill="#fdd94a"/><path d="M2.2 10.6L7 14.3M3.8 9.4L8.1 12.6M5.6 8.2L9 10.8" stroke="#d4ad2e" stroke-width="0.6"/><circle cx="11.5" cy="11.5" r="4.3" fill="#da4453"/><path d="M9.6 9.6L13.4 13.4M13.4 9.6L9.6 13.4" stroke="#fff" stroke-width="1.4"/></svg>
<svg class="a" style="left:487px;top:909px" width="16" height="16" viewBox="0 0 16 16"><path d="M0.5 0.5H12.5L15.5 3.5V15.5H0.5Z" fill="#2c4a6e"/><rect x="2.5" y="1.5" width="10" height="4.5" fill="#3daee9"/><rect x="9.5" y="2" width="1.6" height="3" fill="#2c4a6e"/><rect x="2.5" y="8.5" width="11" height="7" fill="#fcfcfc"/><path d="M4 10.8H12M4 13H12" stroke="#c8c8c8" stroke-width="0.8"/></svg>
<svg class="a" style="left:515px;top:909px" width="16" height="16" viewBox="0 0 16 16"><defs><linearGradient id="ga" x1="0" y1="0" x2="0" y2="1"><stop offset="0" stop-color="#a42cf6"/><stop offset="1" stop-color="#4f3ca8"/></linearGradient></defs><rect x="1" y="1" width="14" height="14" rx="5" fill="url(#ga)"/><path d="M4.6 13L8 3L11.4 13M5.8 9.6H10.2" fill="none" stroke="#f0e8ff" stroke-width="1.1"/></svg>
<svg class="a" style="left:543px;top:909px" width="16" height="16" viewBox="0 0 16 16"><path d="M0.5 3.5H5L6.5 5H12V15.5H0.5Z" fill="#d9b54a"/><path d="M0.5 15.5L2.5 8H15.5L13.5 15.5Z" fill="#fdd94a"/><path d="M8.5 8.5L14 3" stroke="#2c4a6e" stroke-width="2"/><path d="M10.5 1H15.5V6Z" fill="#2c4a6e"/></svg>
<svg class="a" style="left:571px;top:909px" width="16" height="16" viewBox="0 0 16 16"><path d="M0.5 9.5H15.5M8 3.5V16" stroke="#959ca2" stroke-width="1.4"/><path d="M12 13V8A3.3 3.3 0 0 0 8.7 4.7H5" fill="none" stroke="#3daee9" stroke-width="2.6"/><path d="M0.8 4.7L5.8 0.6V8.8Z" fill="#3daee9"/></svg>
<svg class="a" style="left:599px;top:909px" width="16" height="16" viewBox="0 0 16 16"><g transform="translate(16 0) scale(-1 1)"><path d="M0.5 9.5H15.5M8 3.5V16" stroke="#959ca2" stroke-width="1.4"/><path d="M12 13V8A3.3 3.3 0 0 0 8.7 4.7H5" fill="none" stroke="#3daee9" stroke-width="2.6"/><path d="M0.8 4.7L5.8 0.6V8.8Z" fill="#3daee9"/></g></svg>
<svg class="a" style="left:627px;top:909px" width="16" height="16" viewBox="0 0 16 16"><rect x="1.5" y="0.5" width="9" height="8.5" fill="#a3bad0" stroke="#7f93a8" stroke-width="0.8"/><path d="M0.8 6A7 7 0 0 0 2.5 12.5M15.2 6.5A7 7 0 0 1 14 12" fill="none" stroke="#6a9ed0" stroke-width="1.1"/><rect x="3.8" y="4.6" width="8.6" height="8.6" transform="rotate(28 8.1 8.9)" fill="#fff" stroke="#7d858c" stroke-width="0.9"/></svg>
<svg class="a" style="left:655px;top:909px" width="16" height="16" viewBox="0 0 16 16"><rect x="0.5" y="0.5" width="15" height="15" rx="2.5" fill="#2c4a6e"/><path d="M7 2.5V12.5H3Z" fill="#fff"/><path d="M9.3 2.5V12.5H13.3Z" fill="#3daee9"/></svg>
<svg class="a" style="left:683px;top:909px" width="16" height="16" viewBox="0 0 16 16"><rect x="0.5" y="0.5" width="15" height="15" rx="2.5" fill="#2c4a6e"/><path d="M3.5 3V7H13Z" fill="#fff"/><path d="M3.5 13V9H13Z" fill="#3daee9"/></svg>
<svg class="a" style="left:711px;top:909px" width="16" height="16" viewBox="0 0 16 16"><rect x="0.5" y="0.5" width="15" height="15" rx="2.5" fill="#fdd94a" stroke="#2c4a6e" stroke-width="1"/><path d="M4.5 2.5V11.5H13.5M2.5 4.5H11.5V13.5" fill="none" stroke="#2c4a6e" stroke-width="1.3"/></svg>
<svg class="a" style="left:739px;top:909px" width="16" height="16" viewBox="0 0 16 16"><rect x="2.5" y="3" width="12.5" height="12" fill="#fafafa" stroke="#6f7d89" stroke-width="1"/><g fill="#4a90c8"><circle cx="2.5" cy="3" r="1.2"/><circle cx="15" cy="3" r="1.2"/><circle cx="2.5" cy="15" r="1.2"/><circle cx="15" cy="15" r="1.2"/></g><path d="M3.2 12L9.2 5.3L11.3 7.4Z" fill="#b4bec6" stroke="#66737c" stroke-width="0.6"/><path d="M9.6 5L14.2 0.6L15.6 2L11 6.5Z" fill="#6ea23a" stroke="#4f7d27" stroke-width="0.4"/></svg>
<svg class="a" style="left:767px;top:909px" width="16" height="16" viewBox="0 0 16 16"><circle cx="8" cy="8" r="4" fill="#fff" stroke="#222" stroke-width="1"/><path d="M8 4A4 4 0 0 1 8 12Z" fill="#222"/><g fill="#333"><circle cx="8" cy="1.2" r="0.7"/><circle cx="8" cy="14.8" r="0.7"/><circle cx="1.2" cy="8" r="0.7"/><circle cx="14.8" cy="8" r="0.7"/><circle cx="3.2" cy="3.2" r="0.8"/><circle cx="12.8" cy="3.2" r="0.8"/><circle cx="3.2" cy="12.8" r="0.8"/><circle cx="12.8" cy="12.8" r="0.8"/></g></svg>
<svg class="a" style="left:795px;top:909px" width="16" height="16" viewBox="0 0 16 16"><path d="M8 1.5L13 14.5H3Z" fill="#232629"/><path d="M6 13.2H11.5" stroke="#fff" stroke-width="0.7"/></svg>
<svg class="a" style="left:823px;top:909px" width="16" height="16" viewBox="0 0 16 16"><path d="M5.5 7H9A5 5 0 0 1 14 12V15" fill="none" stroke="#7ab851" stroke-width="2.6"/><path d="M0.5 6.8L6.3 1V12.6Z" fill="#7ab851"/></svg>
<svg class="a" style="left:851px;top:909px" width="16" height="16" viewBox="0 0 16 16"><rect x="0.5" y="0.5" width="15" height="15" rx="2.5" fill="#da4453"/><path d="M4 4L12 12M12 4L4 12" stroke="#fff" stroke-width="1.6"/></svg><svg class="a" style="left:919px;top:422px" width="14" height="14" viewBox="0 0 16 16"><path d="M0.5 0.5H12.5L15.5 3.5V15.5H0.5Z" fill="#2c4a6e"/><rect x="2.5" y="1.5" width="10" height="4.5" fill="#3daee9"/><rect x="9.5" y="2" width="1.6" height="3" fill="#2c4a6e"/><rect x="2.5" y="8.5" width="11" height="7" fill="#fcfcfc"/><path d="M4 10.8H12M4 13H12" stroke="#c8c8c8" stroke-width="0.8"/></svg>
<svg class="a" style="left:948px;top:422px" width="14" height="14" viewBox="0 0 16 16"><defs><linearGradient id="ga" x1="0" y1="0" x2="0" y2="1"><stop offset="0" stop-color="#a42cf6"/><stop offset="1" stop-color="#4f3ca8"/></linearGradient></defs><rect x="1" y="1" width="14" height="14" rx="5" fill="url(#ga)"/><path d="M4.6 13L8 3L11.4 13M5.8 9.6H10.2" fill="none" stroke="#f0e8ff" stroke-width="1.1"/></svg>
<svg class="a" style="left:977px;top:422px" width="14" height="14" viewBox="0 0 16 16"><path d="M0.5 3.5H5L6.5 5H12V15.5H0.5Z" fill="#d9b54a"/><path d="M0.5 15.5L2.5 8H15.5L13.5 15.5Z" fill="#fdd94a"/><path d="M8.5 8.5L14 3" stroke="#2c4a6e" stroke-width="2"/><path d="M10.5 1H15.5V6Z" fill="#2c4a6e"/></svg>
<svg class="a" style="left:1006px;top:422px" width="14" height="14" viewBox="0 0 16 16"><path d="M0.5 9.5H15.5M8 3.5V16" stroke="#959ca2" stroke-width="1.4"/><path d="M12 13V8A3.3 3.3 0 0 0 8.7 4.7H5" fill="none" stroke="#3daee9" stroke-width="2.6"/><path d="M0.8 4.7L5.8 0.6V8.8Z" fill="#3daee9"/></svg>
<svg class="a" style="left:1035px;top:422px" width="14" height="14" viewBox="0 0 16 16"><g transform="translate(16 0) scale(-1 1)"><path d="M0.5 9.5H15.5M8 3.5V16" stroke="#959ca2" stroke-width="1.4"/><path d="M12 13V8A3.3 3.3 0 0 0 8.7 4.7H5" fill="none" stroke="#3daee9" stroke-width="2.6"/><path d="M0.8 4.7L5.8 0.6V8.8Z" fill="#3daee9"/></g></svg>
<svg class="a" style="left:1064px;top:422px" width="14" height="14" viewBox="0 0 16 16"><rect x="1.5" y="0.5" width="9" height="8.5" fill="#a3bad0" stroke="#7f93a8" stroke-width="0.8"/><path d="M0.8 6A7 7 0 0 0 2.5 12.5M15.2 6.5A7 7 0 0 1 14 12" fill="none" stroke="#6a9ed0" stroke-width="1.1"/><rect x="3.8" y="4.6" width="8.6" height="8.6" transform="rotate(28 8.1 8.9)" fill="#fff" stroke="#7d858c" stroke-width="0.9"/></svg>
<svg class="a" style="left:1093px;top:422px" width="14" height="14" viewBox="0 0 16 16"><rect x="0.5" y="0.5" width="15" height="15" rx="2.5" fill="#2c4a6e"/><path d="M7 2.5V12.5H3Z" fill="#fff"/><path d="M9.3 2.5V12.5H13.3Z" fill="#3daee9"/></svg>
<svg class="a" style="left:1122px;top:422px" width="14" height="14" viewBox="0 0 16 16"><rect x="0.5" y="0.5" width="15" height="15" rx="2.5" fill="#2c4a6e"/><path d="M3.5 3V7H13Z" fill="#fff"/><path d="M3.5 13V9H13Z" fill="#3daee9"/></svg>
<svg class="a" style="left:1151px;top:422px" width="14" height="14" viewBox="0 0 16 16"><rect x="2.5" y="3" width="12.5" height="12" fill="#fafafa" stroke="#6f7d89" stroke-width="1"/><g fill="#4a90c8"><circle cx="2.5" cy="3" r="1.2"/><circle cx="15" cy="3" r="1.2"/><circle cx="2.5" cy="15" r="1.2"/><circle cx="15" cy="15" r="1.2"/></g><path d="M3.2 12L9.2 5.3L11.3 7.4Z" fill="#b4bec6" stroke="#66737c" stroke-width="0.6"/><path d="M9.6 5L14.2 0.6L15.6 2L11 6.5Z" fill="#6ea23a" stroke="#4f7d27" stroke-width="0.4"/></svg>
<svg class="a" style="left:1180px;top:422px" width="14" height="14" viewBox="0 0 16 16"><circle cx="8" cy="8" r="4" fill="#fff" stroke="#222" stroke-width="1"/><path d="M8 4A4 4 0 0 1 8 12Z" fill="#222"/><g fill="#333"><circle cx="8" cy="1.2" r="0.7"/><circle cx="8" cy="14.8" r="0.7"/><circle cx="1.2" cy="8" r="0.7"/><circle cx="14.8" cy="8" r="0.7"/><circle cx="3.2" cy="3.2" r="0.8"/><circle cx="12.8" cy="3.2" r="0.8"/><circle cx="3.2" cy="12.8" r="0.8"/><circle cx="12.8" cy="12.8" r="0.8"/></g></svg>
<svg class="a" style="left:1209px;top:422px" width="14" height="14" viewBox="0 0 16 16"><path d="M8 1.5L13 14.5H3Z" fill="#232629"/><path d="M6 13.2H11.5" stroke="#fff" stroke-width="0.7"/></svg>
<svg class="a" style="left:1238px;top:422px" width="14" height="14" viewBox="0 0 16 16"><path d="M5.5 7H9A5 5 0 0 1 14 12V15" fill="none" stroke="#7ab851" stroke-width="2.6"/><path d="M0.5 6.8L6.3 1V12.6Z" fill="#7ab851"/></svg>
<svg class="a" style="left:1267px;top:422px" width="14" height="14" viewBox="0 0 16 16"><path d="M8 1L15 8.5H10.5V15H5.5V8.5H1Z" fill="#7ab851"/></svg>
<svg class="a" style="left:1296px;top:422px" width="14" height="14" viewBox="0 0 16 16"><path d="M8 15L15 7.5H10.5V1H5.5V7.5H1Z" fill="#7ab851"/></svg>
<svg class="a" style="left:1325px;top:422px" width="14" height="14" viewBox="0 0 16 16"><rect x="0.5" y="0.5" width="15" height="15" rx="2.5" fill="#da4453"/><path d="M4 4L12 12M12 4L4 12" stroke="#fff" stroke-width="1.6"/></svg><!--/TB-->
<!-- BOTTOM RIGHT BUTTONS -->
<div class="a" style="left:1162px;top:947px;width:93px;height:31px;border:1px solid #7891a9;border-radius:3px;background:linear-gradient(#ccd5df,#c2ccd8)"></div>
<div class="txt" style="left:1172px;top:956px;letter-spacing:0.5px">Помощь</div>
<svg class="a" style="left:1238px;top:959px" width="13" height="8" viewBox="0 0 13 8"><path d="M1 1.5L6.5 7L12 1.5" fill="none" stroke="#333" stroke-width="1.1"/></svg>
<div class="btn" style="left:1263px;top:947px;width:107px;height:31px"></div>
<svg class="a" style="left:1270px;top:954px" width="16" height="16" viewBox="0 0 16 16"><g transform="rotate(-45 8 8)"><rect x="6.4" y="6.5" width="3.2" height="10" rx="1.6" fill="#d2d2d2" stroke="#737373" stroke-width="0.9"/><circle cx="8" cy="4.2" r="3.9" fill="#d2d2d2" stroke="#737373" stroke-width="0.9"/><rect x="6.7" y="-0.6" width="2.6" height="4.6" fill="#e6e6e6"/><path d="M6.7 0.3V3.9H9.3V0.3" fill="none" stroke="#737373" stroke-width="0.8"/></g></svg>
<div class="txt" style="left:1290px;top:956px;letter-spacing:0.8px">Настройки</div>
<!-- LEFT PANEL -->
<div class="grp" style="left:16px;top:38px;width:288px;height:91px"></div>
<div class="txt" style="left:135px;top:44px;letter-spacing:0.25px">Сканер</div>
<div class="a" style="left:28px;top:66px;width:184px;height:29px;background:#fff;border:1px solid #a8a8a8;border-radius:3px"></div>
<div class="txt" style="left:35px;top:74px;letter-spacing:0.1px">Epson: PID 1122</div>
<div class="btn" style="left:220px;top:65px;width:34px;height:31px"></div>
<div class="txt" style="left:231px;top:74px;font-weight:bold;font-size:12px;letter-spacing:0.5px">...</div>
<div class="btn" style="left:262px;top:65px;width:30px;height:30px"></div>
<svg class="a" style="left:269px;top:72px" width="16" height="16" viewBox="0 0 16 16"><g fill="#3daee9"><circle cx="8" cy="8" r="5.2"/><rect x="6.6" y="0.5" width="2.8" height="15" rx="1"/><rect x="0.5" y="6.6" width="15" height="2.8" rx="1"/><rect x="6.6" y="0.5" width="2.8" height="15" rx="1" transform="rotate(45 8 8)"/><rect x="6.6" y="0.5" width="2.8" height="15" rx="1" transform="rotate(-45 8 8)"/></g><circle cx="8" cy="8" r="2.2" fill="#e6e6e6"/></svg>
<div class="txt" style="left:129px;top:103px;font-size:12px;color:#8a8a8a;letter-spacing:0.1px">Локальный</div>

<div class="grp" style="left:16px;top:138px;width:288px;height:801px"></div>
<div class="txt" style="left:27px;top:149px;letter-spacing:0.6px">Цветовой режим:</div>
<div class="combo" style="left:28px;top:172px;width:264px;height:29px"></div>
<div class="a" style="left:36px;top:178px;width:15px;height:15px;border-radius:50%;background:conic-gradient(from 0deg,#f02020,#f0a000,#c0e000,#20d020,#00c0c0,#2080f0,#6020f0,#d020d0,#f02020)"></div>
<div class="a" style="left:36px;top:178px;width:15px;height:15px;border-radius:50%;background:radial-gradient(circle,rgba(255,255,255,0.9),rgba(255,255,255,0) 70%)"></div>
<div class="txt" style="left:55px;top:180px;letter-spacing:0.5px">Цветной (RGB, 8 bit)</div>
<svg class="chev" style="left:273px;top:182px" width="13" height="8" viewBox="0 0 13 8"><path d="M1 1L6.5 6.5L12 1" fill="none" stroke="#333" stroke-width="1.2"/></svg>
<div class="a" style="left:29px;top:210px;width:16px;height:16px;background:#fff;border:1px solid #a8a8a8;border-radius:3px"></div>
<div class="txt" style="left:52px;top:212px;letter-spacing:0.85px">Инвертировать цвета</div>
<div class="txt" style="left:28px;top:237px;letter-spacing:0.6px">Разрешение:</div>
<div class="combo" style="left:28px;top:259px;width:264px;height:29px"></div>
<div class="txt" style="left:34px;top:267px;letter-spacing:0.3px">75 DPI</div>
<svg class="chev" style="left:273px;top:269px" width="13" height="8" viewBox="0 0 13 8"><path d="M1 1L6.5 6.5L12 1" fill="none" stroke="#333" stroke-width="1.2"/></svg>
<div class="txt" style="left:28px;top:297px;letter-spacing:0.65px">Размер области сканирования:</div>
<div class="combo" style="left:28px;top:319px;width:264px;height:29px"></div>
<div class="txt" style="left:34px;top:327px;letter-spacing:0.3px">A4</div>
<svg class="chev" style="left:273px;top:330px" width="13" height="8" viewBox="0 0 13 8"><path d="M1 1L6.5 6.5L12 1" fill="none" stroke="#333" stroke-width="1.2"/></svg>
<div class="a" style="left:27px;top:356px;width:266px;height:1px;background:#b8b8b8"></div>
<div class="btn" style="left:28px;top:365px;width:264px;height:31px"></div>
<svg class="a" style="left:38px;top:372px" width="17" height="16" viewBox="0 0 17 16"><rect x="3" y="0.3" width="13.2" height="15" rx="1.2" fill="#fdd94a"/><path d="M6.5 3.3H14.5M8 5.8H14.5M10 8.3H14.5M8 10.8H14.5M6.5 13.3H14.5" stroke="#d8b83e" stroke-width="0.9"/><path d="M0.8 8H8.5" stroke="#2c4a6e" stroke-width="2.2"/><path d="M6.5 3.8L11 8L6.5 12.2" fill="none" stroke="#2c4a6e" stroke-width="2.2" stroke-linejoin="round"/></svg>
<div class="txt" style="left:59px;top:374px;letter-spacing:0.55px">Предварительное сканирование</div>
<div class="btn" style="left:28px;top:405px;width:264px;height:30px"></div>
<svg class="a" style="left:81px;top:412px" width="14" height="14" viewBox="0 0 14 14"><path d="M0 0H11L14 3V14H0Z" fill="#2c4a6e"/><rect x="2" y="1" width="9" height="4" fill="#3daee9"/><rect x="8" y="1.5" width="1.5" height="3" fill="#2c4a6e"/><rect x="2" y="8" width="10" height="6" fill="#fff"/><path d="M3 10H11M3 12H11" stroke="#bbb" stroke-width="0.8"/></svg>
<div class="txt" style="left:100px;top:413px;letter-spacing:0.55px">Сохранить документ</div>
<div class="btn" style="left:28px;top:444px;width:264px;height:30px"></div>
<svg class="a" style="left:107px;top:450px" width="14" height="16" viewBox="0 0 14 16"><rect x="1" y="4" width="12" height="11.5" rx="1.2" fill="#2c4a6e"/><rect x="2.5" y="5" width="9" height="8" fill="#fdd94a"/><path d="M2 0.3H12A1.5 1.5 0 0 1 13.5 1.8V5H0.5V1.8A1.5 1.5 0 0 1 2 0.3Z" fill="#7ab851"/></svg>
<div class="txt" style="left:126px;top:452px;letter-spacing:0.6px">Сканировать</div>

<div class="btn" style="left:16px;top:947px;width:184px;height:31px"></div>
<svg class="a" style="left:23px;top:955px" width="15" height="15" viewBox="0 0 15 15"><path d="M0 7.5L7 0.5V4.5H15V10.5H7V14.5Z" fill="#7ab851"/></svg>
<div class="txt" style="left:44px;top:956px;letter-spacing:0.55px">Вернуться на главную</div>

<svg class="a" style="left:1233px;top:621px" width="16" height="22" viewBox="0 0 16 22"><path d="M1.5 1.5V18.5L5.5 14.5L8.5 20.5L11 19.3L8.2 13.5H13.5Z" fill="#000" stroke="#fff" stroke-width="1.1" stroke-linejoin="miter"/></svg>
</body></html>
